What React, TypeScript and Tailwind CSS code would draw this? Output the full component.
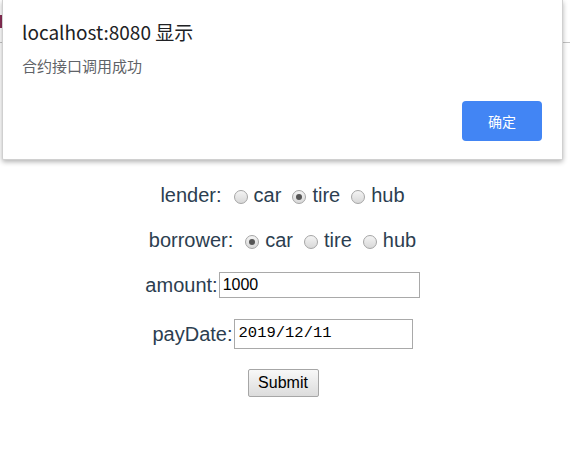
import React from "react";

const Radio = ({ checked }: { checked?: boolean }) => (
  <span className="mt-[5px] flex h-[14px] w-[14px] items-center justify-center rounded-full border border-[#a5a5a5] bg-gradient-to-b from-[#f4f4f4] to-[#d8d8d8]">
    {checked && <span className="h-[6px] w-[6px] rounded-full bg-[#555]" />}
  </span>
);

const RadioRow = ({ label, value }: { label: string; value: string }) => {
  const options = ["car", "tire", "hub"];
  return (
    <div className="flex h-[45px] items-center justify-center">
      <span>{label}:</span>
      {options.map((opt, i) => (
        <span key={opt} className={`flex items-center ${i === 0 ? "ml-[12px]" : "ml-[11px]"}`}>
          <Radio checked={opt === value} />
          <span className="ml-[6px]">{opt}</span>
        </span>
      ))}
    </div>
  );
};

export default function App() {
  return (
    <div className="relative h-[464px] w-[570px] overflow-hidden bg-white">
      {/* page behind the alert */}
      <div className="relative h-[43px] border-b border-[#c4c4c4]">
        <span className="absolute left-0 top-[15px] h-[13px] w-[2px] bg-[#8a2d55]" />
      </div>

      <div className="mt-[129px] pr-[5px] font-['Liberation_Sans',Arial,sans-serif] text-[20px] text-[#2c3e50]">
        <RadioRow label="lender" value="tire" />
        <RadioRow label="borrower" value="car" />

        <div className="flex h-[45px] items-center justify-center">
          <span>amount:</span>
          <div className="ml-[1px] flex h-[26px] w-[201px] items-center border border-[#a9a9a9] pl-[3px] text-[16px] text-black">
            1000
          </div>
        </div>

        <div className="flex h-[54px] items-center justify-center">
          <span>payDate:</span>
          <div className="ml-[1px] flex h-[30px] w-[179px] items-center border border-[#a9a9a9] pl-[4px] font-['Liberation_Mono',monospace] text-[15.5px] text-black">
            2019/12/11
          </div>
        </div>

        <div className="flex h-[44px] items-center justify-center pl-[1px]">
          <button className="flex h-[28px] w-[71px] items-center justify-center rounded-[2px] border border-[#a6a6a6] bg-gradient-to-b from-[#f8f8f8] to-[#dcdcdc] text-[16px] text-black">
            Submit
          </button>
        </div>
      </div>

      {/* alert dialog */}
      <div className="absolute left-[2px] top-0 h-[160px] w-[561px] rounded-b-[2px] border-x border-b border-[#d0d0d0] bg-white px-[19px] shadow-[0_2px_5px_rgba(0,0,0,0.3)] font-['Noto_Sans_CJK_SC','Noto_Sans',sans-serif]">
        <div className="pt-[18px] text-[19px] leading-[28px] text-[#202124]">localhost:8080 显示</div>
        <div className="mt-[10px] text-[15px] leading-[20px] text-[#5f6368]">合约接口调用成功</div>
        <div className="mt-[25px] flex justify-end pr-[1px]">
          <button className="flex h-[40px] w-[80px] items-center justify-center rounded-[4px] bg-[#4285f4] text-[14px] text-white">
            确定
          </button>
        </div>
      </div>
    </div>
  );
}
